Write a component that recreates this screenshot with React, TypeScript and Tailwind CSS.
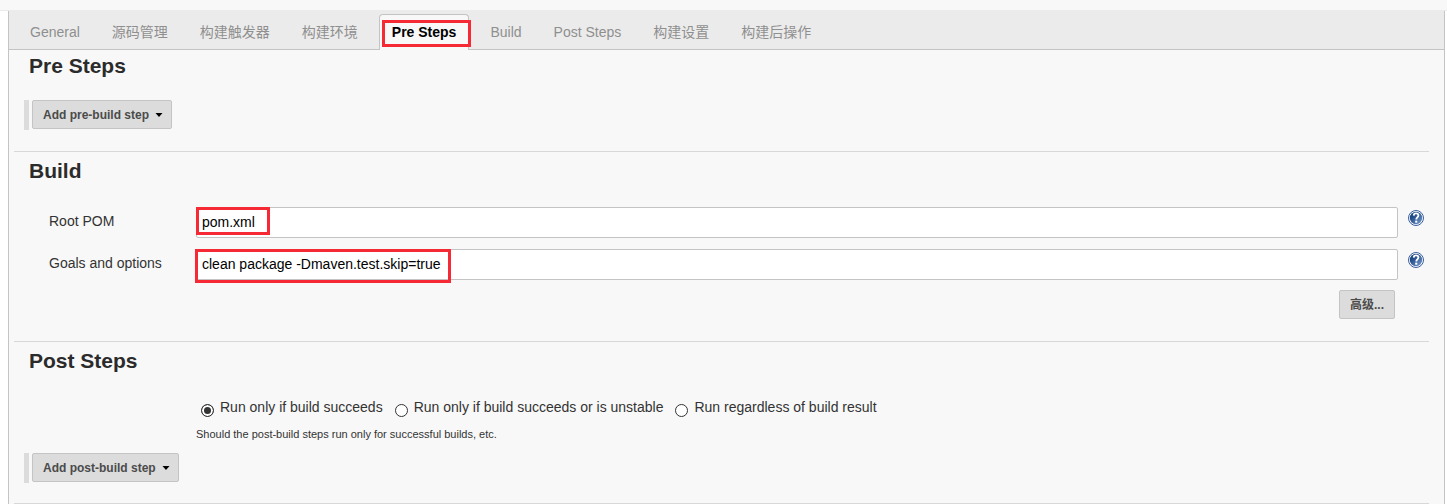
import React, { ReactNode, useState } from "react";

const tabs = [
  "General",
  "源码管理",
  "构建触发器",
  "构建环境",
  "Pre Steps",
  "Build",
  "Post Steps",
  "构建设置",
  "构建后操作",
];

const conditions = [
  "Run only if build succeeds",
  "Run only if build succeeds or is unstable",
  "Run regardless of build result",
];

function HelpButton({ label }: { label: string }) {
  return (
    <button type="button" aria-label={label} className="mt-[3px] size-4 shrink-0">
      <svg viewBox="0 0 16 16" className="size-4">
        <defs>
          <linearGradient id="help" x1="0" y1="0" x2="1" y2="1">
            <stop offset="0.3" stopColor="#204a87" />
            <stop offset="1" stopColor="#7d9fd0" />
          </linearGradient>
        </defs>
        <circle cx="8" cy="8" r="7.5" fill="#fff" stroke="#3a5f9b" />
        <circle cx="8" cy="8" r="6.2" fill="url(#help)" />
        <path
          d="M5.7 5.6C5.8 4 6.7 3.4 8 3.4c1.5 0 2.4.8 2.4 2.1 0 1.9-2.1 2-2.1 4"
          fill="none"
          stroke="#fff"
          strokeWidth="1.8"
        />
        <rect x="7.2" y="10.6" width="2.1" height="2.1" fill="#fff" />
      </svg>
    </button>
  );
}

function StepButton({ children }: { children: ReactNode }) {
  return (
    <div className="ml-[10px] flex items-start border-l-5 border-[#dcdcdc] pb-px pl-[3px]">
      <button
        type="button"
        className="flex h-[29px] items-center gap-[6px] rounded-xs border border-[#c4c4c4] bg-[#dcdcdc] pr-2 pl-[10px] text-[12px] font-bold text-[#4b4b4b]"
      >
        {children}
        <svg viewBox="0 0 8 4" className="h-1 w-2">
          <path d="M0.5 0h7L4 4z" fill="#000" />
        </svg>
      </button>
    </div>
  );
}

function Section({ title, children }: { title: string; children: ReactNode }) {
  return (
    <section className="border-b border-[#d8d8d8] pt-[5px] pb-5 first:pt-[2px]">
      <h2 className="pl-[15px] text-[21px] leading-7 font-bold text-[#2b2b2b]">
        {title}
      </h2>
      {children}
    </section>
  );
}

function Field({
  id,
  label,
  value,
  mark,
}: {
  id: string;
  label: string;
  value: string;
  mark: string;
}) {
  return (
    <div className="flex items-start pr-[5px] pl-[35px]">
      <label htmlFor={id} className="w-[147px] shrink-0 leading-7">
        {label}
      </label>
      <div className="relative mr-[10px] flex-1">
        <input
          id={id}
          type="text"
          defaultValue={value}
          className="block h-[31px] w-full rounded-xs border border-[#c4c4c4] bg-white px-[5px] pb-[2px] text-black"
        />
        <span
          className={`pointer-events-none absolute border-3 border-[#f52a35] ${mark}`}
        />
      </div>
      <HelpButton label={`Help for ${label}`} />
    </div>
  );
}

function App() {
  const [condition, setCondition] = useState(0);

  return (
    <div className="flex min-h-screen flex-col bg-white font-['Liberation_Sans','Noto_Sans_CJK_SC',sans-serif] text-[14px] text-[#333]">
      <header className="h-[11px] border-b border-[#ebebeb] bg-[#f8f8f8]" />
      <main className="mr-[2px] ml-2 flex-1 border-x border-[#c4c4c4] bg-[#f8f8f8]">
        <nav className="flex border-b border-[#c4c4c4] bg-[#ebebeb] px-[5px] pt-[3px]">
          {tabs.map((tab) => (
            <a
              key={tab}
              href="#"
              className={
                tab === "Pre Steps"
                  ? "relative mx-[5px] -mb-px h-9 rounded-t-sm border border-b-0 border-[#c4c4c4] bg-[#f8f8f8] px-3 leading-[34px] font-bold text-black"
                  : "mx-[5px] h-[35px] border border-b-0 border-transparent px-[10px] leading-[34px] text-[#8f8f8f]"
              }
            >
              {tab}
              {tab === "Pre Steps" && (
                <span className="pointer-events-none absolute top-[5px] -right-[3px] left-[2px] h-[27px] border-3 border-[#f52a35]" />
              )}
            </a>
          ))}
        </nav>

        <form className="pr-[15px] pl-[5px]">
          <Section title="Pre Steps">
            <div className="mt-5 mb-px">
              <StepButton>Add pre-build step</StepButton>
            </div>
          </Section>

          <Section title="Build">
            <div className="mt-[22px] flex flex-col gap-[11px]">
              <Field
                id="pom"
                label="Root POM"
                value="pom.xml"
                mark="top-0 left-0 h-7 w-[74px]"
              />
              <Field
                id="goals"
                label="Goals and options"
                value="clean package -Dmaven.test.skip=true"
                mark="top-0 -left-px h-[34px] w-64"
              />
            </div>
            <div className="mt-[10px] mb-[2px] flex justify-end pr-[34px]">
              <button
                type="button"
                className="h-[29px] rounded-xs border border-[#c4c4c4] bg-[#dcdcdc] px-[10px] text-[12px] font-bold text-[#4b4b4b]"
              >
                高级...
              </button>
            </div>
          </Section>

          <Section title="Post Steps">
            <div className="mt-[22px] pl-[182px]">
              <div className="flex flex-wrap gap-x-3 pl-[5px]">
                {conditions.map((text, i) => (
                  <label key={text} className="flex items-start gap-[6px] leading-5">
                    <input
                      type="radio"
                      name="condition"
                      checked={condition === i}
                      onChange={() => setCondition(i)}
                      className="mt-[7px] size-[13px] appearance-none rounded-full border border-[#333] bg-white checked:bg-[#333] checked:shadow-[inset_0_0_0_2px_#fff]"
                    />
                    {text}
                  </label>
                ))}
              </div>
              <p className="mt-[9px] text-[11px] leading-4">
                Should the post-build steps run only for successful builds, etc.
              </p>
            </div>
            <div className="mt-[11px]">
              <StepButton>Add post-build step</StepButton>
            </div>
          </Section>
        </form>
      </main>
    </div>
  );
}

export default App;
